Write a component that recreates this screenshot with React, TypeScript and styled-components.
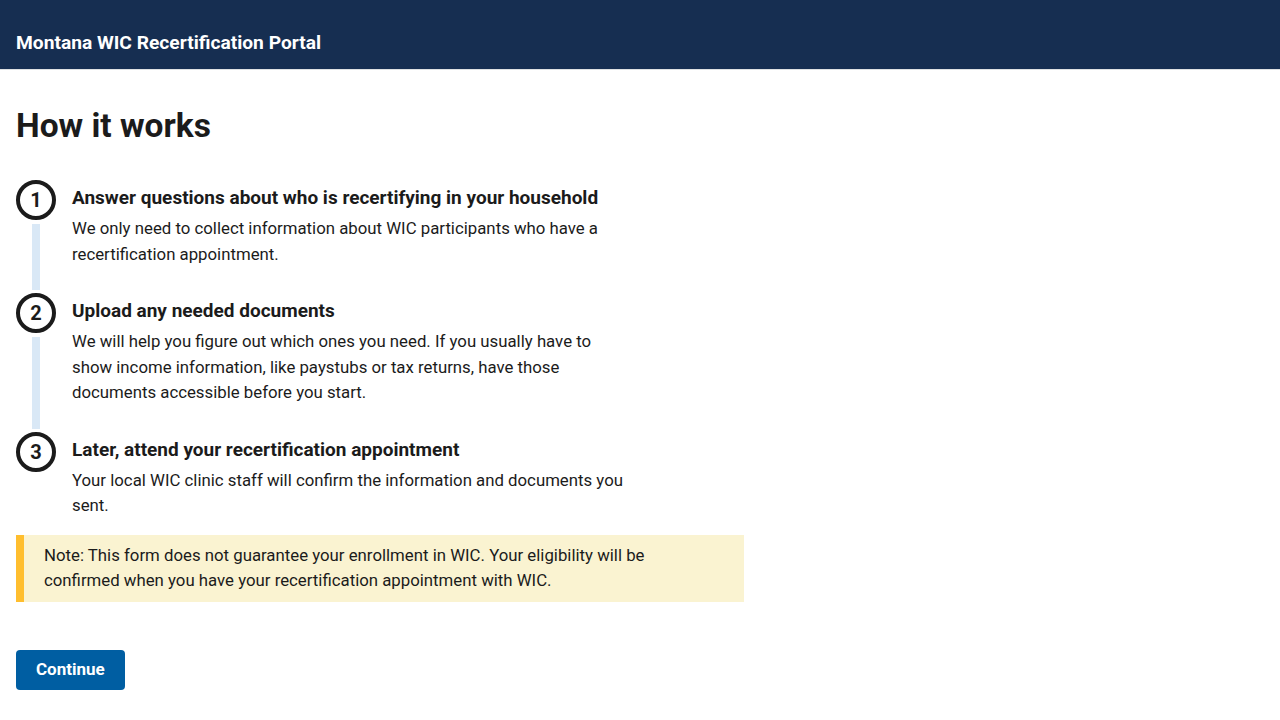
import React from "react";
import styled, { createGlobalStyle } from "styled-components";

const GlobalStyle = createGlobalStyle`
  html, body { margin: 0; padding: 0; background: #ffffff; }
  body {
    font-family: Roboto, "Liberation Sans", sans-serif;
    color: #1b1b1b;
  }
  * { box-sizing: border-box; }
`;

const Header = styled.header`
  height: 70px;
  background: #162e51;
  border-bottom: 1px solid #dfe1e2;
  display: flex;
  align-items: flex-end;
  padding: 0 16px 14px;
`;

const SiteTitle = styled.div`
  color: #ffffff;
  font-weight: 700;
  font-size: 19.2px;
  line-height: 24px;
`;

const Main = styled.main`
  padding: 36px 16px 30px;
`;

const Title = styled.h1`
  margin: 0 0 34px;
  font-size: 33.5px;
  line-height: 40px;
  font-weight: 700;
`;

const ProcessList = styled.ol`
  list-style: none;
  margin: 0;
  padding: 0;
`;

const Item = styled.li`
  display: flex;
  gap: 16px;
`;

const Rail = styled.div`
  width: 40px;
  flex: 0 0 40px;
  display: flex;
  flex-direction: column;
  align-items: center;
`;

const Circle = styled.div`
  width: 40px;
  height: 40px;
  border-radius: 50%;
  border: 4px solid #1b1b1b;
  display: flex;
  align-items: center;
  justify-content: center;
  font-weight: 700;
  font-size: 20px;
  line-height: 1;
  background: #fff;
`;

const Connector = styled.div`
  flex: 1;
  width: 8px;
  background: #d9e8f6;
  margin: 4px 0 3px;
`;

const Body = styled.div<{ $last?: boolean }>`
  max-width: 560px;
  padding-top: 7px;
  padding-bottom: ${(p) => (p.$last ? "0" : "26px")};
`;

const StepHeading = styled.h2`
  margin: 0;
  font-size: 19px;
  line-height: 22px;
  font-weight: 700;
`;

const StepText = styled.p`
  margin: 7px 0 0;
  font-size: 16.8px;
  line-height: 25.5px;
`;

const Alert = styled.div`
  margin-top: 16px;
  max-width: 728px;
  background: #faf3d1;
  border-left: 8px solid #ffbe2e;
  padding: 8px 20px;
`;

const AlertText = styled.p`
  margin: 0;
  max-width: 620px;
  font-size: 16.8px;
  line-height: 25.5px;
`;

const Button = styled.button`
  margin-top: 48px;
  background: #005ea2;
  color: #fff;
  border: none;
  border-radius: 4px;
  font-family: inherit;
  font-weight: 700;
  font-size: 17px;
  line-height: 1;
  height: 40px;
  padding: 0 20px;
  cursor: pointer;
`;

const steps = [
  {
    title: "Answer questions about who is recertifying in your household",
    text: "We only need to collect information about WIC participants who have a recertification appointment.",
  },
  {
    title: "Upload any needed documents",
    text: "We will help you figure out which ones you need. If you usually have to show income information, like paystubs or tax returns, have those documents accessible before you start.",
  },
  {
    title: "Later, attend your recertification appointment",
    text: "Your local WIC clinic staff will confirm the information and documents you sent.",
  },
];

export default function App() {
  return (
    <>
      <GlobalStyle />
      <Header>
        <SiteTitle>Montana WIC Recertification Portal</SiteTitle>
      </Header>
      <Main>
        <Title>How it works</Title>
        <ProcessList>
          {steps.map((s, i) => {
            const last = i === steps.length - 1;
            return (
              <Item key={i}>
                <Rail>
                  <Circle>{i + 1}</Circle>
                  {!last && <Connector />}
                </Rail>
                <Body $last={last}>
                  <StepHeading>{s.title}</StepHeading>
                  <StepText>{s.text}</StepText>
                </Body>
              </Item>
            );
          })}
        </ProcessList>
        <Alert>
          <AlertText>
            Note: This form does not guarantee your enrollment in WIC. Your eligibility will be
            confirmed when you have your recertification appointment with WIC.
          </AlertText>
        </Alert>
        <Button>Continue</Button>
      </Main>
    </>
  );
}
